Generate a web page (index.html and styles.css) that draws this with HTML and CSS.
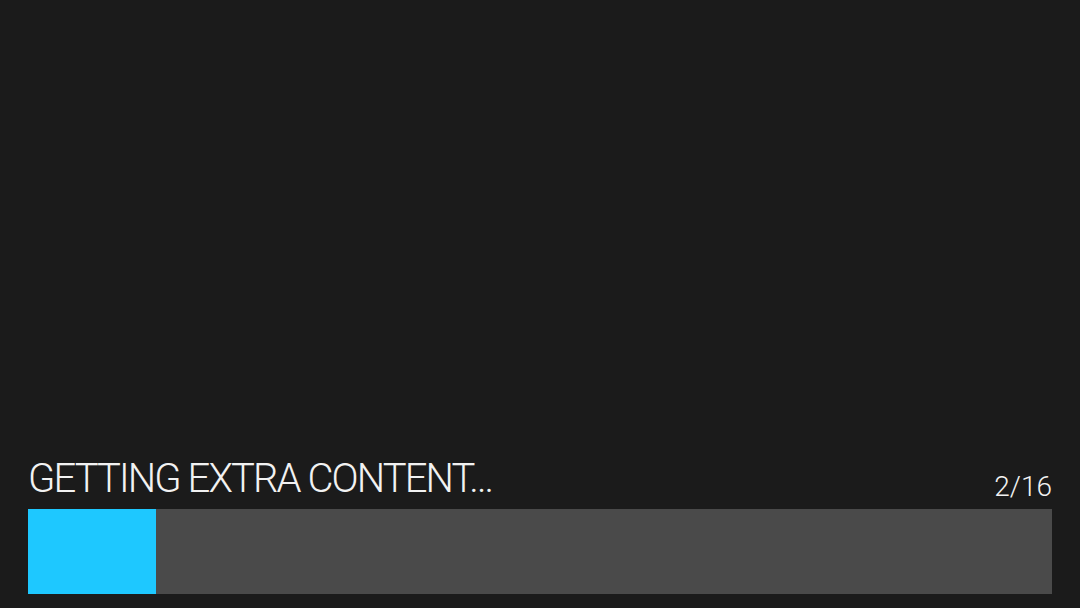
FILE: index.html
```html
<!DOCTYPE html>
<html>
<head>
<meta charset="utf-8">
<link rel="stylesheet" href="styles.css">
</head>
<body>
<div class="screen">
  <div class="loader">
    <div class="labels">
      <div class="title">GETTING EXTRA CONTENT...</div>
      <div class="count">2/16</div>
    </div>
    <div class="track"><div class="fill" style="width: 12.5%"></div></div>
  </div>
</div>
</body>
</html>
```
FILE: styles.css
```css
html, body {
  margin: 0;
  padding: 0;
  background: #1b1b1b;
}
.screen {
  width: 1080px;
  height: 608px;
  display: flex;
  flex-direction: column;
  justify-content: flex-end;
  box-sizing: border-box;
  padding: 0 28px 14px 28px;
  font-family: Roboto, "Noto Sans", sans-serif;
  color: #f2f2f2;
}
.labels {
  display: flex;
  justify-content: space-between;
  align-items: flex-end;
  margin-bottom: 10px;
}
.title {
  font-size: 40px;
  font-weight: 300;
  line-height: 40px;
  letter-spacing: -1.9px;
}
.count {
  font-size: 28px;
  font-weight: 300;
  line-height: 28px;
  margin-bottom: -2px;
}
.track {
  height: 85px;
  background: #4a4a4a;
  display: flex;
}
.fill {
  height: 100%;
  background: #1ec8ff;
}
```
